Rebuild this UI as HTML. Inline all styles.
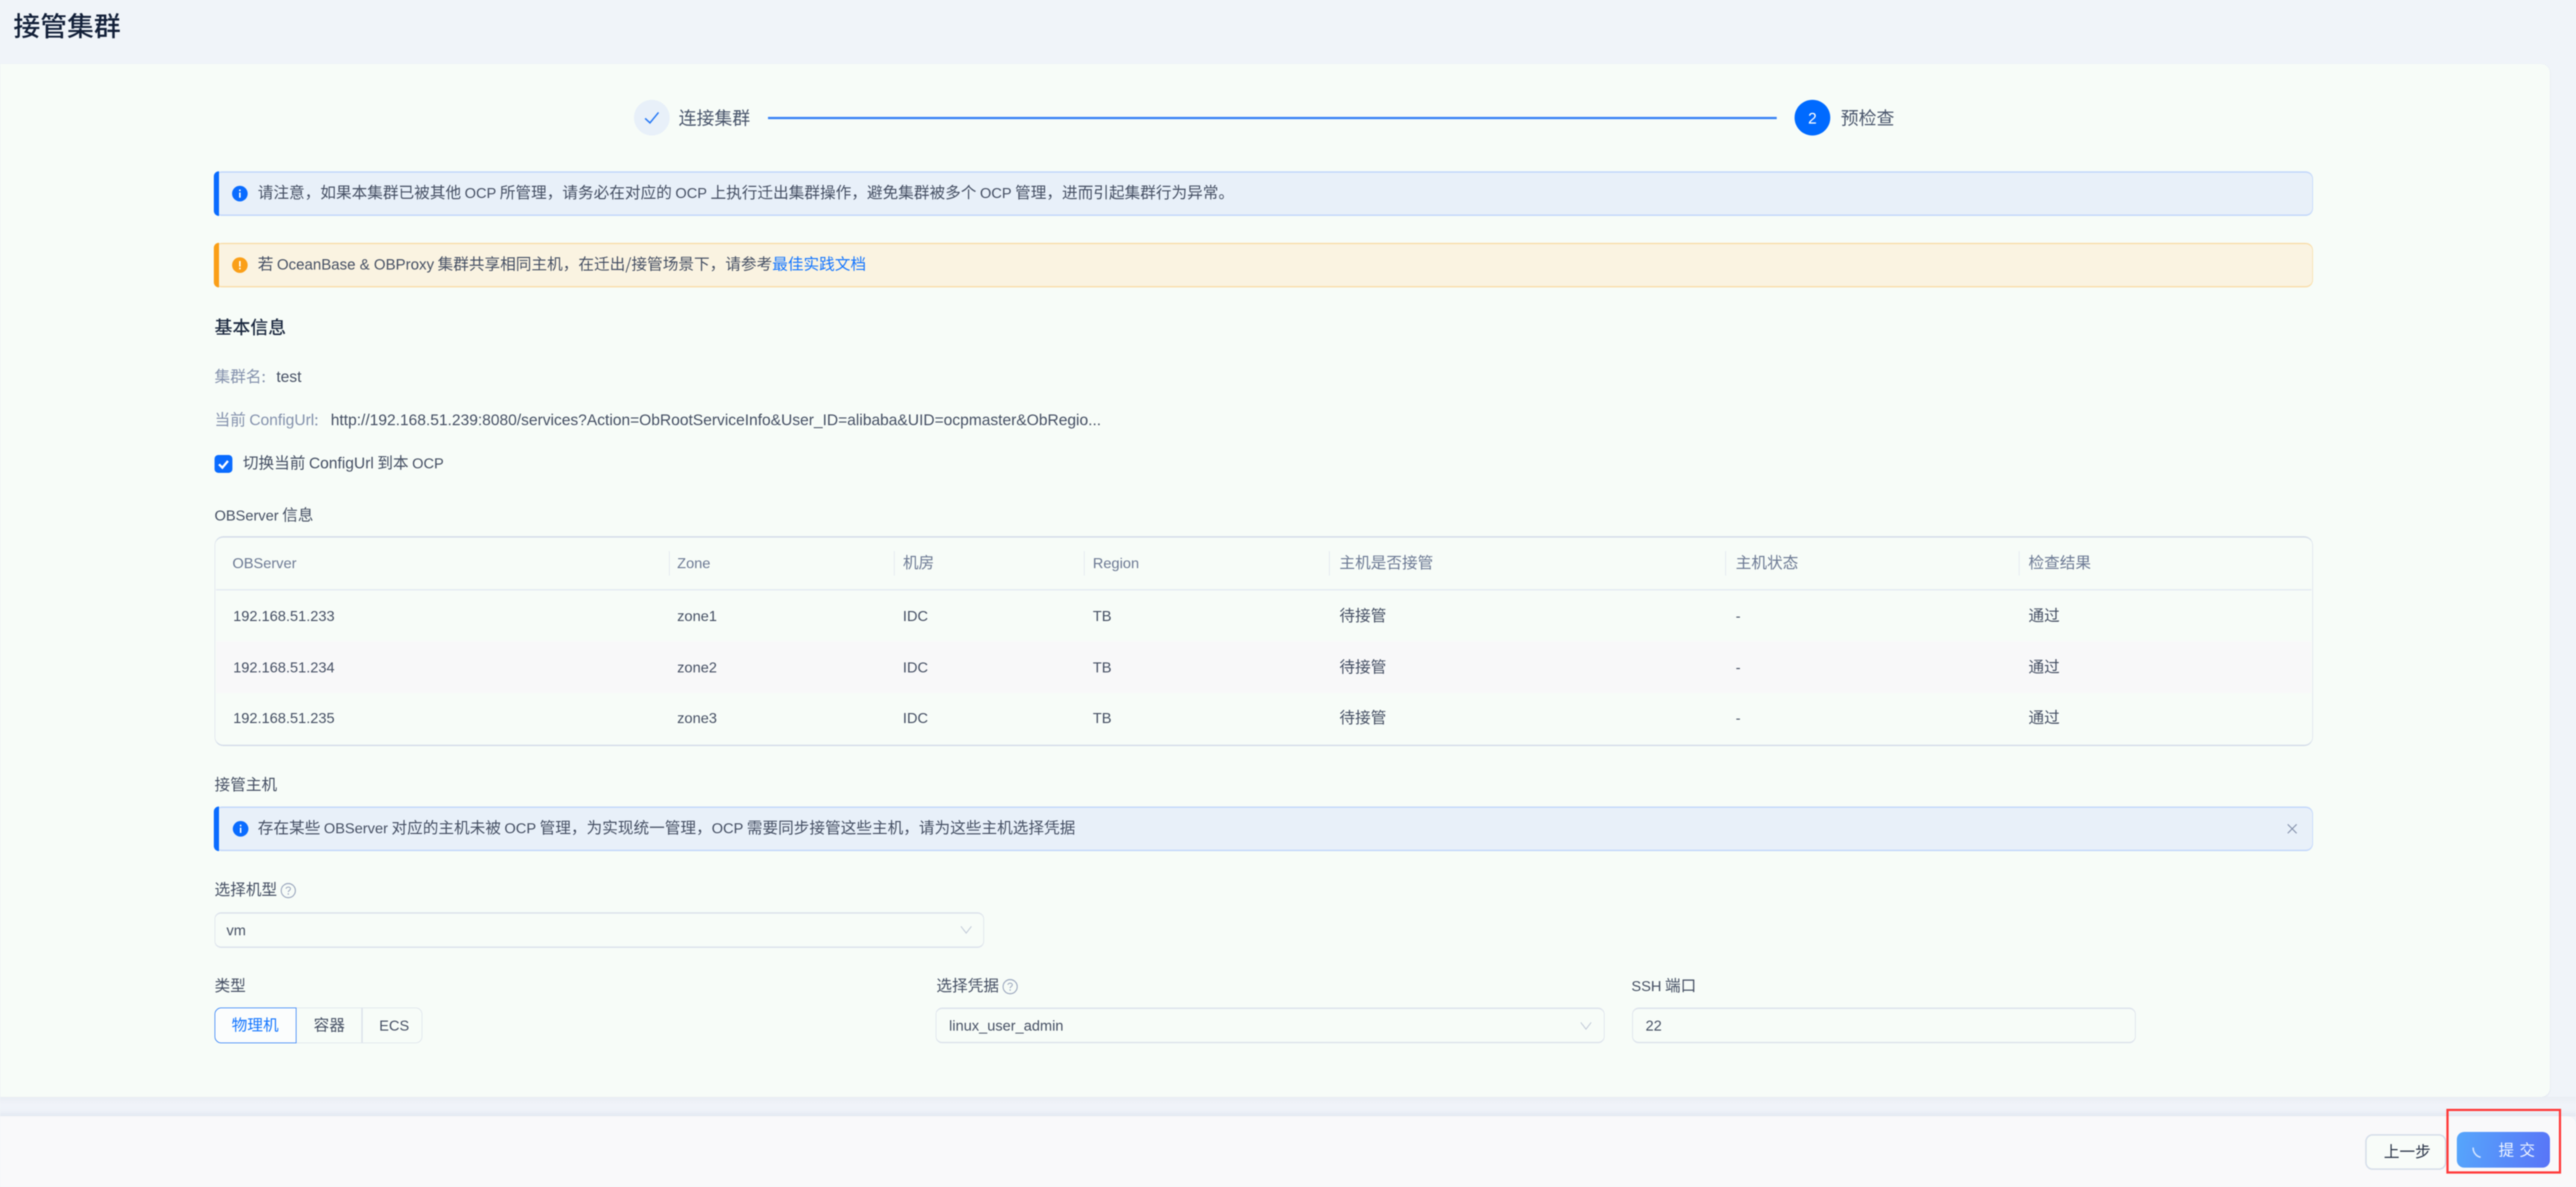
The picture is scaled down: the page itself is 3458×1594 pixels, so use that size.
<!DOCTYPE html>
<html lang="zh-CN">
<head>
<meta charset="utf-8">
<title>接管集群</title>
<style>
html,body{margin:0;padding:0;width:3458px;height:1594px;overflow:hidden;background:#f0f4f9;}
body{position:relative;font-family:"Liberation Sans","Noto Sans CJK SC",sans-serif;font-size:21px;color:#465064;}
#page{position:absolute;left:0;top:0;width:3458px;height:1594px;filter:blur(.8px);}
.a{position:absolute;}
.t{position:absolute;white-space:nowrap;line-height:30px;height:30px;margin-top:-2px;font-family:"Noto Sans CJK SC","Liberation Sans",sans-serif;font-size:21px;color:#465064;}
.t b{font-weight:400;font-family:"Liberation Sans",sans-serif;font-size:19.6px;}
.t b.w{font-size:20.9px;}
.t b.m{font-size:20.2px;}
.lab{color:#8592ad;}
.th{color:#6d7a94;}
.card{left:0;top:86px;width:3423px;height:1387px;background:#f7fcf8;border-radius:0 12px 12px 0;box-shadow:0 1px 2px rgba(90,110,150,.12);}
.alert{left:288px;width:2817px;height:60px;box-sizing:border-box;border-radius:10px;border-style:solid;border-width:2px 1.5px 2px 0;}
.alert i{position:absolute;left:-1px;top:-2px;bottom:-2px;width:7px;border-radius:8px 0 0 8px;}
.blue{background:#e8f0f9;border-color:#c4d8fb;}
.blue i{background:#0a6cff;}
.org{background:#faf3e1;border-color:#f9dfae;}
.org i{background:#fa9f18;}
.tbl{left:288px;top:720px;width:2817px;height:282px;box-sizing:border-box;border-style:solid;border-width:2px 1.5px;border-color:#d6deea #dfe5ee;border-radius:12px;}
.sep{position:absolute;top:740px;height:33px;width:1px;background:#e3e8f0;}
.inp{box-sizing:border-box;border:1.5px solid #dde3ec;border-top-width:2px;border-bottom-width:2px;border-radius:9px;height:48px;}
.seg{box-sizing:border-box;top:1353px;height:48px;}
</style>
</head>
<body>
<div id="page">
<div class="t" style="left:18px;top:17px;height:36px;line-height:36px;font-size:36px;font-weight:500;color:#132039;">接管集群</div>

<div class="a card"></div>
<div class="a" style="left:0;top:1473px;width:3458px;height:26px;background:linear-gradient(#e9edf3,#f0f3f9 40%,#eef2f8 70%,#e3e8f1);"></div>
<div class="a" style="left:0;top:1499px;width:3458px;height:95px;background:#f9f9fa;border-radius:0 12px 0 0;"></div>

<!-- steps -->
<div class="a" style="left:851px;top:134px;width:48px;height:48px;border-radius:50%;background:#e8f0f9;"></div>
<svg class="a" style="left:851px;top:134px;" width="48" height="48" viewBox="0 0 48 48"><path d="M15 25 L21.5 31 L33 17" fill="none" stroke="#2a7bf6" stroke-width="2"/></svg>
<div class="t" style="left:911px;top:144px;font-size:24px;color:#4a566c;">连接集群</div>
<div class="a" style="left:1031px;top:157px;width:1354px;height:3px;background:#3a84f5;box-shadow:0 0 1px #a9c9fa;"></div>
<div class="a" style="left:2409px;top:134px;width:48px;height:48px;border-radius:50%;background:#006aff;"></div>
<div class="t" style="left:2409px;top:145px;width:48px;text-align:center;color:#fff;"><b style="font-size:21px;">2</b></div>
<div class="t" style="left:2471px;top:144px;font-size:24px;color:#4a566c;">预检查</div>

<!-- alerts -->
<div class="a alert blue" style="top:230px;"><i></i></div>
<svg class="a" style="left:311px;top:249px;" width="22" height="22" viewBox="0 0 22 22"><circle cx="11" cy="11" r="10.5" fill="#0a6cff"/><rect x="10" y="9.5" width="2" height="7" fill="#fff"/><rect x="10" y="5.5" width="2" height="2.2" fill="#fff"/></svg>
<div class="t" style="left:346px;top:245px;">请注意，如果本集群已被其他 <b>OCP</b> 所管理，请务必在对应的 <b>OCP</b> 上执行迁出集群操作，避免集群被多个 <b>OCP</b> 管理，进而引起集群行为异常。</div>

<div class="a alert org" style="top:326px;"><i></i></div>
<svg class="a" style="left:311px;top:345px;" width="22" height="22" viewBox="0 0 22 22"><circle cx="11" cy="11" r="10.5" fill="#fa9f18"/><rect x="10" y="5.5" width="2" height="7.5" fill="#fff"/><rect x="10" y="14.5" width="2" height="2.2" fill="#fff"/></svg>
<div class="t" style="left:346px;top:341px;">若 <b class="m">OceanBase &amp; OBProxy</b> 集群共享相同主机，在迁出/接管场景下，请参考<span style="color:#1677ff;">最佳实践文档</span></div>

<!-- basic info -->
<div class="t" style="left:288px;top:425px;font-size:24px;font-weight:500;color:#1c2940;">基本信息</div>
<div class="t lab" style="left:288px;top:492px;">集群名:</div>
<div class="t" style="left:371px;top:492px;"><b class="w">test</b></div>
<div class="t lab" style="left:288px;top:550px;">当前 <b class="w">ConfigUrl</b>:</div>
<div class="t" style="left:444px;top:550px;"><b class="w">http://192.168.51.239:8080/services?Action=ObRootServiceInfo&amp;User_ID=alibaba&amp;UID=ocpmaster&amp;ObRegio...</b></div>
<div class="a" style="left:288px;top:611px;width:24px;height:24px;border-radius:5px;background:#0a6cff;"></div>
<svg class="a" style="left:288px;top:611px;" width="24" height="24" viewBox="0 0 24 24"><path d="M6 12.5 L10.5 17 L18 8" fill="none" stroke="#fff" stroke-width="3"/></svg>
<div class="t" style="left:326px;top:608px;">切换当前 <b class="w">ConfigUrl</b> 到本 <b>OCP</b></div>
<div class="t" style="left:288px;top:678px;"><b>OBServer</b> 信息</div>

<!-- table -->
<div class="a tbl"></div>
<div class="a" style="left:290px;top:791px;width:2813px;height:2px;background:#e6ebf2;"></div>
<div class="a" style="left:290px;top:861px;width:2813px;height:70px;background:#f8f8f9;"></div>
<div class="sep" style="left:898px;"></div>
<div class="sep" style="left:1200px;"></div>
<div class="sep" style="left:1455px;"></div>
<div class="sep" style="left:1784px;"></div>
<div class="sep" style="left:2316px;"></div>
<div class="sep" style="left:2710px;"></div>

<div class="t th" style="left:312px;top:742px;"><b>OBServer</b></div>
<div class="t th" style="left:909px;top:742px;"><b>Zone</b></div>
<div class="t th" style="left:1212px;top:742px;">机房</div>
<div class="t th" style="left:1467px;top:742px;"><b>Region</b></div>
<div class="t th" style="left:1798px;top:742px;">主机是否接管</div>
<div class="t th" style="left:2330px;top:742px;">主机状态</div>
<div class="t th" style="left:2723px;top:742px;">检查结果</div>

<div class="t" style="left:313px;top:813px;"><b>192.168.51.233</b></div>
<div class="t" style="left:909px;top:813px;"><b>zone1</b></div>
<div class="t" style="left:1212px;top:813px;"><b>IDC</b></div>
<div class="t" style="left:1467px;top:813px;"><b>TB</b></div>
<div class="t" style="left:1798px;top:813px;">待接管</div>
<div class="t" style="left:2330px;top:813px;"><b>-</b></div>
<div class="t" style="left:2723px;top:813px;">通过</div>

<div class="t" style="left:313px;top:882px;"><b>192.168.51.234</b></div>
<div class="t" style="left:909px;top:882px;"><b>zone2</b></div>
<div class="t" style="left:1212px;top:882px;"><b>IDC</b></div>
<div class="t" style="left:1467px;top:882px;"><b>TB</b></div>
<div class="t" style="left:1798px;top:882px;">待接管</div>
<div class="t" style="left:2330px;top:882px;"><b>-</b></div>
<div class="t" style="left:2723px;top:882px;">通过</div>

<div class="t" style="left:313px;top:950px;"><b>192.168.51.235</b></div>
<div class="t" style="left:909px;top:950px;"><b>zone3</b></div>
<div class="t" style="left:1212px;top:950px;"><b>IDC</b></div>
<div class="t" style="left:1467px;top:950px;"><b>TB</b></div>
<div class="t" style="left:1798px;top:950px;">待接管</div>
<div class="t" style="left:2330px;top:950px;"><b>-</b></div>
<div class="t" style="left:2723px;top:950px;">通过</div>

<!-- host section -->
<div class="t" style="left:288px;top:1040px;">接管主机</div>
<div class="a alert blue" style="top:1083px;"><i></i></div>
<svg class="a" style="left:312px;top:1102px;" width="22" height="22" viewBox="0 0 22 22"><circle cx="11" cy="11" r="10.5" fill="#0a6cff"/><rect x="10" y="9.5" width="2" height="7" fill="#fff"/><rect x="10" y="5.5" width="2" height="2.2" fill="#fff"/></svg>
<div class="t" style="left:346px;top:1098px;">存在某些 <b>OBServer</b> 对应的主机未被 <b>OCP</b> 管理，为实现统一管理，<b>OCP</b> 需要同步接管这些主机，请为这些主机选择凭据</div>
<svg class="a" style="left:3070px;top:1106px;" width="14" height="14" viewBox="0 0 14 14"><path d="M1 1 L13 13 M13 1 L1 13" fill="none" stroke="#8592ad" stroke-width="1.5"/></svg>

<div class="t" style="left:288px;top:1181px;">选择机型</div>
<svg class="a" style="left:376px;top:1185px;" width="22" height="22" viewBox="0 0 22 22"><circle cx="11" cy="11" r="9.5" fill="none" stroke="#9aa6bd" stroke-width="1.4"/><path d="M8 8.5 C8 5.5 14 5.5 14 8.5 C14 10.5 11 10.5 11 13" fill="none" stroke="#9aa6bd" stroke-width="1.3"/><rect x="10.2" y="14.6" width="1.6" height="1.8" fill="#9aa6bd"/></svg>
<div class="a inp" style="left:288px;top:1225px;width:1033px;"></div>
<div class="t" style="left:304px;top:1235px;"><b>vm</b></div>
<svg class="a" style="left:1289px;top:1243px;" width="16" height="11" viewBox="0 0 16 11"><path d="M1 1 L8 10 L15 1" fill="none" stroke="#c3cbd8" stroke-width="1.4"/></svg>

<div class="t" style="left:288px;top:1310px;">类型</div>
<div class="a seg" style="left:395px;width:172px;border:1.5px solid #dde3ec;border-left:0;border-radius:0 9px 9px 0;"></div>
<div class="a" style="left:485px;top:1353px;width:1.5px;height:48px;background:#dde3ec;"></div>
<div class="a seg" style="left:288px;width:110px;border:1.5px solid #2a7bf6;border-radius:9px 0 0 9px;background:#fbfdfd;"></div>
<div class="t" style="left:311px;top:1363px;color:#1677ff;">物理机</div>
<div class="t" style="left:421px;top:1363px;">容器</div>
<div class="t" style="left:509px;top:1363px;"><b>ECS</b></div>

<div class="t" style="left:1257px;top:1310px;">选择凭据</div>
<svg class="a" style="left:1345px;top:1314px;" width="22" height="22" viewBox="0 0 22 22"><circle cx="11" cy="11" r="9.5" fill="none" stroke="#9aa6bd" stroke-width="1.4"/><path d="M8 8.5 C8 5.5 14 5.5 14 8.5 C14 10.5 11 10.5 11 13" fill="none" stroke="#9aa6bd" stroke-width="1.3"/><rect x="10.2" y="14.6" width="1.6" height="1.8" fill="#9aa6bd"/></svg>
<div class="a inp" style="left:1256px;top:1353px;width:898px;"></div>
<div class="t" style="left:1274px;top:1363px;"><b>linux_user_admin</b></div>
<svg class="a" style="left:2121px;top:1372px;" width="16" height="11" viewBox="0 0 16 11"><path d="M1 1 L8 10 L15 1" fill="none" stroke="#c3cbd8" stroke-width="1.4"/></svg>

<div class="t" style="left:2190px;top:1310px;"><b>SSH</b> 端口</div>
<div class="a inp" style="left:2191px;top:1353px;width:676px;"></div>
<div class="t" style="left:2209px;top:1363px;"><b>22</b></div>

<!-- footer buttons -->
<div class="a" style="left:3175px;top:1523px;width:109px;height:48px;box-sizing:border-box;border:2px solid #d6deea;border-radius:10px;background:#f8fcf9;"></div>
<div class="t" style="left:3200px;top:1533px;color:#2a3448;">上一步</div>
<div class="a" style="left:3298px;top:1520px;width:125px;height:48px;border-radius:10px;background:linear-gradient(100deg,#56a6fb,#5874f7);"></div>
<svg class="a" style="left:3316px;top:1538px;" width="18" height="18" viewBox="0 0 18 18"><path d="M4 3 C3.5 9 8 15 14 16" fill="none" stroke="#d6e6ff" stroke-width="2"/></svg>
<div class="t" style="left:3354px;top:1531px;color:#eef4ff;letter-spacing:7px;">提交</div>
<div class="a" style="left:3284px;top:1489px;width:154px;height:87px;box-sizing:border-box;border:3px solid #ff3b3b;"></div>
</div>
</body>
</html>
